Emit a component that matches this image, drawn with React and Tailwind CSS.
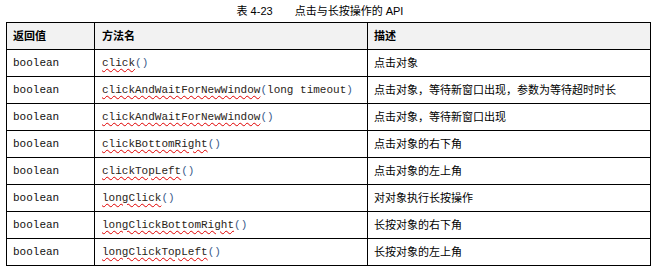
import React from 'react';

const rows = [
  { name: 'click', args: '', desc: '点击对象' },
  { name: 'clickAndWaitForNewWindow', args: 'long timeout', desc: '点击对象，等待新窗口出现，参数为等待超时时长' },
  { name: 'clickAndWaitForNewWindow', args: '', desc: '点击对象，等待新窗口出现' },
  { name: 'clickBottomRight', args: '', desc: '点击对象的右下角' },
  { name: 'clickTopLeft', args: '', desc: '点击对象的左上角' },
  { name: 'longClick', args: '', desc: '对对象执行长按操作' },
  { name: 'longClickBottomRight', args: '', desc: '长按对象的右下角' },
  { name: 'longClickTopLeft', args: '', desc: '长按对象的左上角' },
];

const cjk = { fontFamily: '"Liberation Sans", "Noto Sans CJK SC", sans-serif' };
const mono = { fontFamily: '"Liberation Mono", "Noto Sans CJK SC", monospace' };

function App() {
  return (
    <div className="w-[656px] h-[266px] bg-white text-black pl-[6px]" style={cjk}>
      <div className="h-[22px] flex items-center justify-center text-[11px] pr-[22px]">
        <span>表 4-23</span>
        <span className="ml-[22px]">点击与长按操作的 API</span>
      </div>
      <table className="w-[644px] border-collapse border border-black table-fixed">
        <colgroup>
          <col className="w-[88px]" />
          <col className="w-[273px]" />
          <col className="w-[283px]" />
        </colgroup>
        <thead>
          <tr className="h-[27px] bg-[#f2f2f2]">
            <th className="border border-black text-left font-bold text-[11px] pl-[6px] p-0">返回值</th>
            <th className="border border-black text-left font-bold text-[11px] pl-[7px] p-0">方法名</th>
            <th className="border border-black text-left font-bold text-[11px] pl-[6px] p-0">描述</th>
          </tr>
        </thead>
        <tbody>
          {rows.map((r, i) => (
            <tr key={i} className="h-[27px]">
              <td className="border border-black text-[11px] pl-[6px] p-0 text-[#111]" style={mono}>boolean</td>
              <td className="border border-black text-[11px] pl-[7px] p-0 text-[#2a2418] whitespace-nowrap" style={mono}>
                <span className="underline decoration-wavy decoration-[#e00000] decoration-1 underline-offset-2">{r.name}</span>
                <span className="text-[#3a5a8a]">(</span>
                {r.args}
                <span className="text-[#3a5a8a]">)</span>
              </td>
              <td className="border border-black text-[11px] pl-[6px] p-0 whitespace-nowrap">{r.desc}</td>
            </tr>
          ))}
        </tbody>
      </table>
    </div>
  );
}

export default App;
